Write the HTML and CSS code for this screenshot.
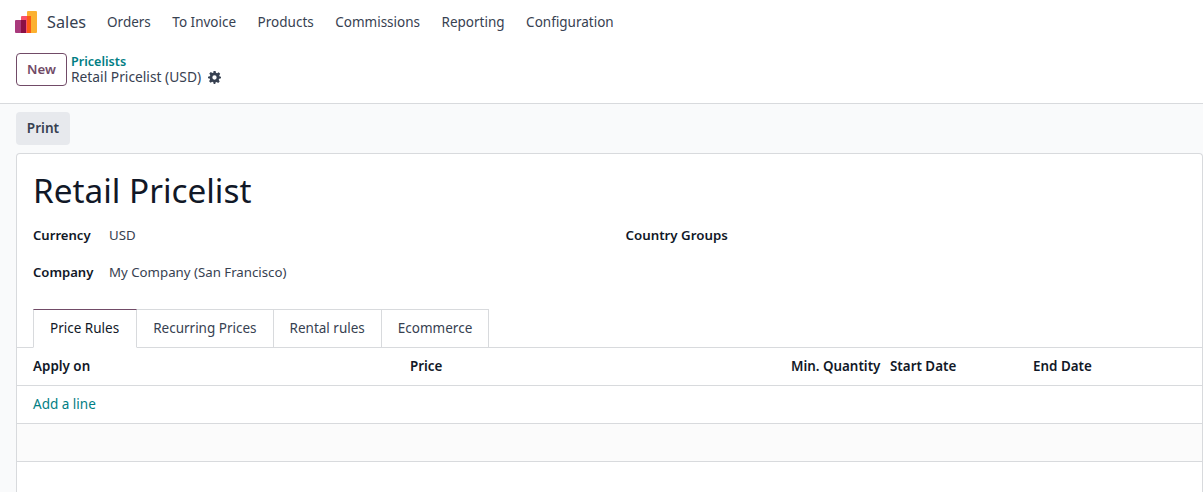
FILE: index.html
```html
<!DOCTYPE html>
<html lang="en">
<head>
<meta charset="utf-8">
<title>Retail Pricelist</title>
<link rel="stylesheet" href="styles.css">
</head>
<body>
<header class="head">
  <nav class="nav">
    <svg class="logo" width="22" height="22" viewBox="0 0 22 22" aria-hidden="true">
      <rect x="12" y="0" width="10" height="22" rx="1" fill="#fbb130"/>
      <rect x="6" y="5" width="10" height="17" rx="1" fill="#f9526a"/>
      <rect x="12" y="5" width="4" height="17" fill="#fb5a15"/>
      <rect x="0" y="9" width="11" height="13" rx="1" fill="#a93a7c"/>
      <rect x="6" y="9" width="5" height="13" fill="#8a0f45"/>
    </svg>
    <span class="brand">Sales</span>
    <a class="nav-item">Orders</a>
    <a class="nav-item">To Invoice</a>
    <a class="nav-item">Products</a>
    <a class="nav-item">Commissions</a>
    <a class="nav-item">Reporting</a>
    <a class="nav-item">Configuration</a>
  </nav>
  <div class="panel">
    <button class="btn-new">New</button>
    <div class="crumbs">
      <a class="crumb-link">Pricelists</a>
      <div class="crumb-current">Retail Pricelist (USD)
        <svg class="gear" width="13" height="13" viewBox="0 0 24 24" aria-hidden="true"><path fill="#374151" fill-rule="evenodd" d="M10 0h4l.7 3.300 2.100.9 2.900-1.800 2.800 2.800-1.800 2.900.9 2.100L24 10.500v3l-3.300.7-.9 2.100 1.800 2.900-2.800 2.800-2.900-1.800-2.100.9L13.500 24h-3l-.7-3.300-2.100-.9-2.900 1.800-2.800-2.800 1.800-2.900-.9-2.100L0 13.500v-3l3.300-.7.9-2.100-1.800-2.900 2.800-2.800 2.900 1.800 2.100-.9zM12 8a4 4 0 1 0 0 8 4 4 0 0 0 0-8z"/></svg>
      </div>
    </div>
  </div>
</header>
<main class="content">
  <div class="actions"><button class="btn-print">Print</button></div>
  <section class="sheet">
    <h1 class="title">Retail Pricelist</h1>
    <div class="fields">
      <div class="col">
        <div class="field"><label class="lbl">Currency</label><span class="val">USD</span></div>
        <div class="field"><label class="lbl">Company</label><span class="val">My Company (San Francisco)</span></div>
      </div>
      <div class="col">
        <div class="field"><label class="lbl wide">Country Groups</label></div>
      </div>
    </div>
    <div class="tabs">
      <a class="tab active">Price Rules</a>
      <a class="tab">Recurring Prices</a>
      <a class="tab">Rental rules</a>
      <a class="tab">Ecommerce</a>
    </div>
    <div class="row thead">
      <span class="c1">Apply on</span>
      <span class="c2">Price</span>
      <span class="c3">Min. Quantity</span>
      <span class="c4">Start Date</span>
      <span class="c5">End Date</span>
    </div>
    <div class="row"><a class="add">Add a line</a></div>
    <div class="row stripe"></div>
  </section>
</main>
</body>
</html>
```
FILE: styles.css
```css
* { box-sizing: border-box; }
html, body { margin: 0; height: 100%; }
body {
  height: 492px;
  overflow: hidden;
  background: #f9fafb;
  font-family: "Noto Sans", sans-serif;
  font-size: 13.500px;
  color: #374151;
}
a { text-decoration: none; }
.head {
  height: 104px;
  background: #fff;
  border-bottom: 1px solid #d8dadd;
}
.nav {
  height: 43px;
  display: flex;
  align-items: center;
  padding-left: 15px;
}
.logo { flex: none; }
.brand { font-size: 16.200px; margin-left: 10px; margin-right: 21px; color: #374151; }
.nav-item { margin-right: 21.500px; color: #374151; font-size: 13.500px; }
.panel {
  display: flex;
  align-items: center;
  gap: 4px;
  padding: 10px 16px 0;
}
.btn-new {
  width: 51px;
  height: 33px;
  padding: 0 0 2px;
  background: #fff;
  border: 1px solid #714b67;
  border-radius: 4px;
  color: #714b67;
  font: 600 13.200px "Noto Sans", sans-serif;
}
.crumbs { line-height: 16px; }
.crumb-link { display: block; line-height: 15px; color: #017e84; font-weight: 600; font-size: 12.600px; }
.crumb-current { display: flex; align-items: center; gap: 7px; font-size: 13.800px; }
.gear { margin-top: 1px; }
.content { padding: 8px 0 0 16px; }
.actions { height: 41px; }
.btn-print {
  width: 54px;
  height: 33px;
  padding: 0 0 2px;
  background: #e7e9ed;
  border: 0;
  border-radius: 4px;
  color: #374151;
  font: 600 13.600px "Noto Sans", sans-serif;
}
.sheet {
  height: 340px;
  background: #fff;
  border: 1px solid #d8dadd;
  border-radius: 4px 4px 0 0;
  border-bottom: 0;
}
.title {
  margin: 15px 0 0 16px;
  font-size: 33.300px;
  line-height: 42px;
  font-weight: 400;
  color: #111827;
}
.fields {
  display: grid;
  grid-template-columns: 592.500px 1fr;
  margin: 12px 0 0 16px;
}
.field {
  display: flex;
  align-items: center;
  height: 24px;
  margin-bottom: 13px;
}
.lbl { width: 76px; font-weight: 600; color: #111827; font-size: 13.100px; }
.lbl.wide { width: auto; white-space: nowrap; font-size: 13.300px; }
.val { color: #374151; font-size: 13.250px; }
.tabs {
  display: flex;
  margin-top: 12px;
  padding-left: 16px;
  height: 39px;
  border-bottom: 1px solid #d8dadd;
}
.tab {
  height: 39px;
  padding: 0 16px;
  line-height: 37px;
  border: 1px solid #d8dadd;
  border-left: 0;
  color: #374151;
}
.tab.active {
  height: 39px;
  padding-right: 17px;
  color: #111827;
  background: #fff;
  border-left: 1px solid #d8dadd;
  border-top-color: #714b67;
  border-bottom-color: #fff;
}
.row {
  height: 38px;
  display: flex;
  align-items: center;
  padding: 0 0 2px 16px;
  border-bottom: 1px solid #d8dadd;
}
.thead { font-weight: 600; color: #111827; font-size: 13.400px; }
.c1 { width: 377px; }
.c2 { width: 381px; }
.c3 { width: 99px; }
.c4 { width: 143px; }
.add { color: #017e84; }
.stripe { background: #fbfbfb; }
```
